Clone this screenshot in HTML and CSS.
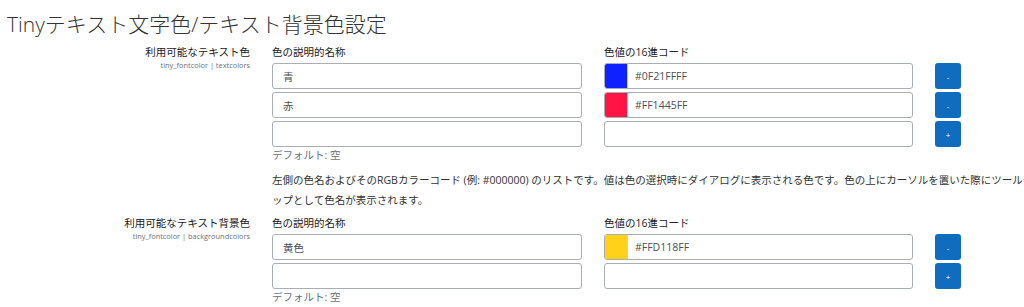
FILE: index.html
```html
<!DOCTYPE html>
<html lang="ja">
<head>
  <meta charset="UTF-8">
  <title>Tinyテキスト文字色/テキスト背景色設定</title>
  <link rel="stylesheet" href="styles.css">
</head>
<body>
  <h2 class="page-title">Tinyテキスト文字色/テキスト背景色設定</h2>

  <!-- テキスト色 -->
  <div class="setting">
    <div class="setting-label">
      <div class="name">利用可能なテキスト色</div>
      <div class="key">tiny_fontcolor | textcolors</div>
    </div>
    <div class="setting-content">
      <div class="row head">
        <span class="col-name">色の説明的名称</span>
        <span class="col-value">色値の16進コード</span>
      </div>
      <div class="row">
        <input class="col-name field" type="text" value="青">
        <div class="col-value field color-field">
          <span class="swatch" style="background:#0F21FF"></span>
          <span class="hex">#0F21FFFF</span>
        </div>
        <button class="btn">-</button>
      </div>
      <div class="row">
        <input class="col-name field" type="text" value="赤">
        <div class="col-value field color-field">
          <span class="swatch" style="background:#FF1445"></span>
          <span class="hex">#FF1445FF</span>
        </div>
        <button class="btn">-</button>
      </div>
      <div class="row">
        <input class="col-name field" type="text" value="">
        <div class="col-value field color-field"></div>
        <button class="btn">+</button>
      </div>
      <div class="default">デフォルト: 空</div>
      <p class="desc">左側の色名およびそのRGBカラーコード (例: #000000) のリストです。値は色の選択時にダイアログに表示される色です。色の上にカーソルを置いた際にツールチップとして色名が表示されます。</p>
    </div>
  </div>

  <!-- テキスト背景色 -->
  <div class="setting second">
    <div class="setting-label">
      <div class="name">利用可能なテキスト背景色</div>
      <div class="key">tiny_fontcolor | backgroundcolors</div>
    </div>
    <div class="setting-content">
      <div class="row head">
        <span class="col-name">色の説明的名称</span>
        <span class="col-value">色値の16進コード</span>
      </div>
      <div class="row">
        <input class="col-name field" type="text" value="黄色">
        <div class="col-value field color-field">
          <span class="swatch" style="background:#FFD118"></span>
          <span class="hex">#FFD118FF</span>
        </div>
        <button class="btn">-</button>
      </div>
      <div class="row">
        <input class="col-name field" type="text" value="">
        <div class="col-value field color-field"></div>
        <button class="btn">+</button>
      </div>
      <div class="default">デフォルト: 空</div>
    </div>
  </div>
</body>
</html>
```

FILE: styles.css
```css
body {
  margin: 0;
  overflow: hidden;
  font-family: "Open Sans", "Noto Sans CJK JP", sans-serif;
  font-size: 10.5px;
  line-height: 15px;
  color: #1d2125;
  background: #fff;
}
.page-title {
  margin: 12px 0 8px 7px;
  font-size: 21px;
  line-height: 25px;
  font-weight: 300;
  color: #333;
}
.setting {
  display: grid;
  grid-template-columns: 250px 1fr;
  column-gap: 22px;
}
.setting.second {
  margin-top: 6px;
}
.setting-label {
  text-align: right;
}
.setting-label .key {
  font-size: 7.4px;
  line-height: 10px;
  color: #6a737b;
}
.row {
  display: flex;
  gap: 22px;
  margin-bottom: 3px;
}
.col-name {
  width: 310px;
  flex: none;
}
.col-value {
  width: 309px;
  flex: none;
}
.field {
  box-sizing: border-box;
  height: 26px;
  margin: 0;
  border: 1px solid #a9aeb4;
  border-radius: 3px;
  background: #fff;
  font-family: inherit;
  font-size: 10.5px;
  color: #495057;
}
input.field {
  padding: 0 10px;
}
.color-field {
  display: flex;
  align-items: center;
  overflow: hidden;
}
.swatch {
  width: 22px;
  height: 100%;
  border-right: 1px solid #ced4da;
}
.hex {
  padding-left: 7px;
}
.btn {
  width: 26px;
  height: 26px;
  padding: 0;
  border: none;
  border-radius: 3px;
  background: #0f6cbf;
  color: #fff;
  font-family: inherit;
  font-size: 8px;
}
.default {
  margin-top: -2px;
  color: #6a737b;
}
.desc {
  width: 770px;
  margin: 7px 0 0;
  line-height: 20px;
  color: #333;
}
```
